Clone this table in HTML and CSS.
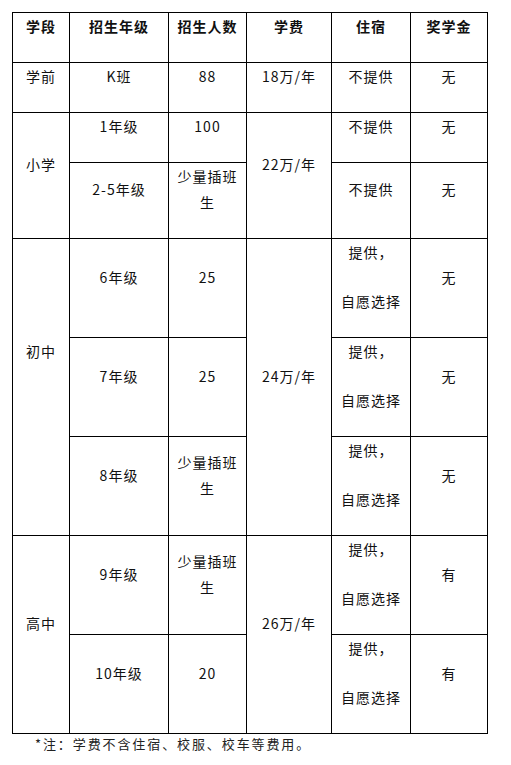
FILE: index.html
```html
<!DOCTYPE html>
<html lang="zh">
<head>
<meta charset="utf-8">
<link rel="stylesheet" href="styles.css">
</head>
<body>
<div class="page">
  <table class="fees">
    <colgroup>
      <col class="c1"><col class="c2"><col class="c3"><col class="c4"><col class="c5"><col class="c6">
    </colgroup>
    <tr class="h50">
      <th>学段</th><th>招生年级</th><th>招生人数</th><th>学费</th><th>住宿</th><th>奖学金</th>
    </tr>
    <tr class="h50">
      <td>学前</td><td>K班</td><td>88</td><td>18万/年</td><td>不提供</td><td>无</td>
    </tr>
    <tr class="h50">
      <td rowspan="2">小学</td><td>1年级</td><td>100</td><td rowspan="2">22万/年</td><td>不提供</td><td>无</td>
    </tr>
    <tr class="h75">
      <td>2-5年级</td><td class="wrap">少量插班生</td><td>不提供</td><td>无</td>
    </tr>
    <tr class="h99">
      <td rowspan="3" class="low">初中</td><td>6年级</td><td>25</td><td rowspan="3">24万/年</td>
      <td><p class="gap">提供，</p><p>自愿选择</p></td><td>无</td>
    </tr>
    <tr class="h99">
      <td>7年级</td><td>25</td>
      <td><p class="gap">提供，</p><p>自愿选择</p></td><td>无</td>
    </tr>
    <tr class="h99">
      <td>8年级</td><td class="wrap">少量插班生</td>
      <td><p class="gap">提供，</p><p>自愿选择</p></td><td>无</td>
    </tr>
    <tr class="h99">
      <td rowspan="2">高中</td><td>9年级</td><td class="wrap">少量插班生</td><td rowspan="2">26万/年</td>
      <td><p class="gap">提供，</p><p>自愿选择</p></td><td>有</td>
    </tr>
    <tr class="h99">
      <td>10年级</td><td>20</td>
      <td><p class="gap">提供，</p><p>自愿选择</p></td><td>有</td>
    </tr>
  </table>
  <p class="note">*注：学费不含住宿、校服、校车等费用。</p>
</div>
</body>
</html>
```

FILE: styles.css
```css
html, body {
  margin: 0;
  padding: 0;
  background: #fff;
}

.page {
  padding: 12px 0 0 12px;
  font-family: "Microsoft YaHei", "Noto Sans CJK SC", "Noto Sans", sans-serif;
  color: #111;
}

.fees {
  border-collapse: collapse;
  table-layout: fixed;
  width: 475px;
  font-size: 14px;
  letter-spacing: 1px;
  line-height: 26px;
}

.c1 { width: 57px; }
.c2 { width: 99px; }
.c3 { width: 78px; }
.c4 { width: 85px; }
.c5 { width: 79px; }
.c6 { width: 77px; }

.fees th,
.fees td {
  border: 1px solid #000;
  text-align: center;
  vertical-align: middle;
  padding: 0 7px 23px;
}

.fees th {
  font-weight: bold;
}

.h50 { height: 50px; }
.h75 { height: 75px; }
.h99 { height: 99px; }

.fees td.low {
  padding-bottom: 72px;
}

.fees p {
  margin: 0;
}

.fees p.gap {
  margin-bottom: 23px;
}

.note {
  margin: 0;
  padding-left: 23px;
  font-size: 13px;
  letter-spacing: 1.9px;
  line-height: 20px;
  color: #222;
}
```
